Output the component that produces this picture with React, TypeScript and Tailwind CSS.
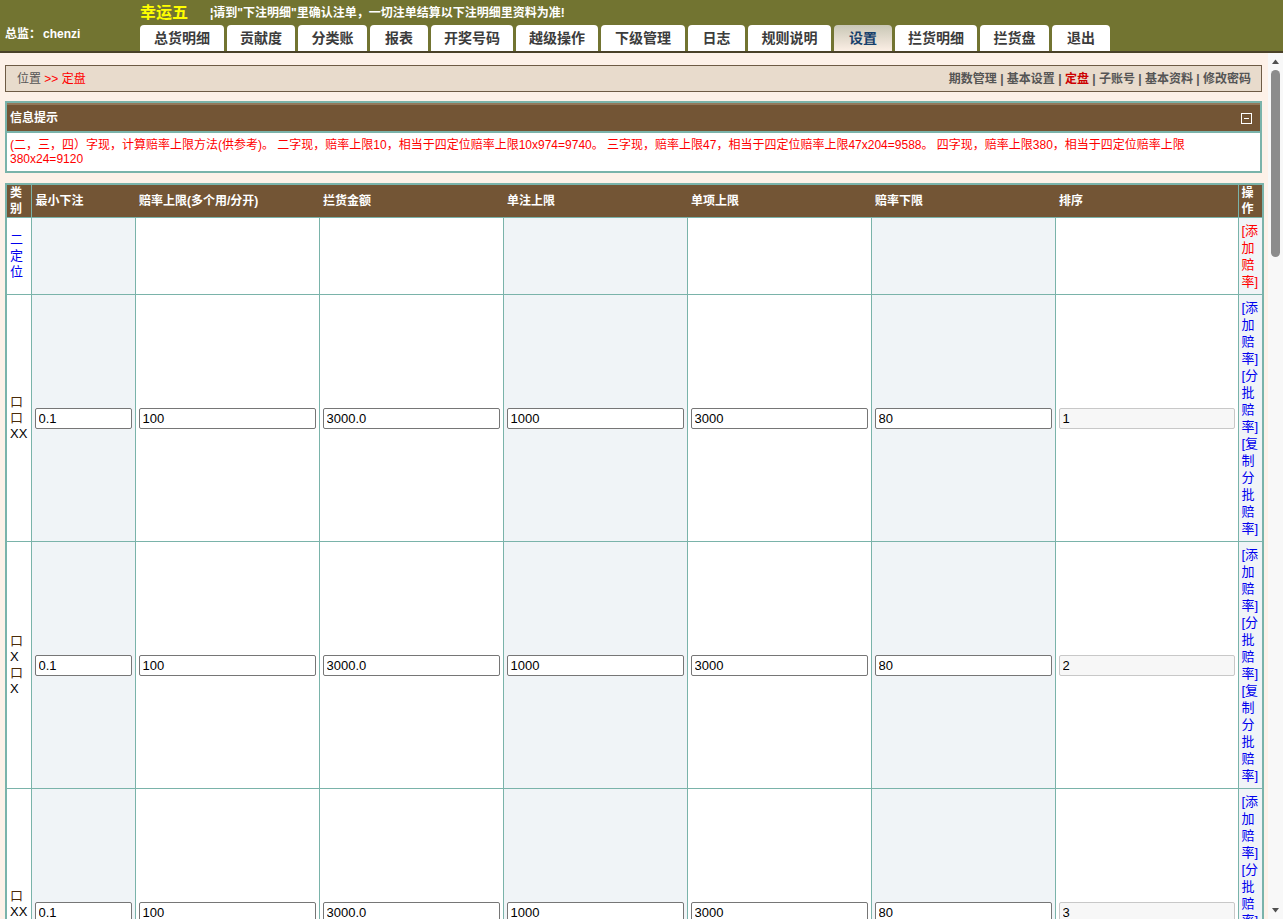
import React from "react";

const tabs: { t: string; w: string }[] = [
  { t: "总货明细", w: "w-[84px]" },
  { t: "贡献度", w: "w-[68px]" },
  { t: "分类账", w: "w-[69px]" },
  { t: "报表", w: "w-[58px]" },
  { t: "开奖号码", w: "w-[82px]" },
  { t: "越级操作", w: "w-[82px]" },
  { t: "下级管理", w: "w-[84px]" },
  { t: "日志", w: "w-[57px]" },
  { t: "规则说明", w: "w-[83px]" },
  { t: "设置", w: "w-[58px]" },
  { t: "拦货明细", w: "w-[82px]" },
  { t: "拦货盘", w: "w-[69px]" },
  { t: "退出", w: "w-[58px]" },
];

type Row = {
  cls: React.ReactNode;
  ops: "add" | "full";
  values?: string[];
};

const Box = () => <span className="text-[#4a2a08]">口</span>;

const rows: Row[] = [
  { cls: <span className="text-[#0000ee]">二定位</span>, ops: "add" },
  {
    cls: (
      <>
        <Box />
        <Box />
        XX
      </>
    ),
    ops: "full",
    values: ["0.1", "100", "3000.0", "1000", "3000", "80", "1"],
  },
  {
    cls: (
      <>
        <Box />X<Box />X
      </>
    ),
    ops: "full",
    values: ["0.1", "100", "3000.0", "1000", "3000", "80", "2"],
  },
  {
    cls: (
      <>
        <Box />
        XX
        <Box />
      </>
    ),
    ops: "full",
    values: ["0.1", "100", "3000.0", "1000", "3000", "80", "3"],
  },
  {
    cls: (
      <>
        X<Box />
        <Box />X
      </>
    ),
    ops: "full",
    values: ["0.1", "100", "3000.0", "1000", "3000", "80", "4"],
  },
  {
    cls: (
      <>
        X<Box />X<Box />
      </>
    ),
    ops: "full",
    values: ["0.1", "100", "3000.0", "1000", "3000", "80", "5"],
  },
];

const colBg = [
  "bg-white",
  "bg-[#f0f4f7]",
  "bg-white",
  "bg-white",
  "bg-[#f0f4f7]",
  "bg-white",
  "bg-[#f0f4f7]",
  "bg-white",
  "bg-[#f0f4f7]",
];

export default function App() {
  return (
    <div
      className="h-[919px] overflow-hidden bg-[#fdf1e8] text-[12px] text-black"
      style={{ fontFamily: '"Liberation Sans", Arial, "Noto Sans CJK SC", sans-serif' }}
    >
      {/* Header */}
      <header className="flex h-[53px] bg-[#727431] border-b-2 border-[#4a4128]">
        <div className="w-[140px] shrink-0 pl-[5px] pt-[25px] text-[12px] font-bold text-white">
          总监：<span className="ml-[2px]">chenzi</span>
        </div>
        <div className="flex flex-col">
          <div className="flex h-[25px] items-center">
            <span className="text-[16px] font-bold leading-none text-[#ffff00]">幸运五</span>
            <span className="ml-[22px] text-[12px] font-bold text-white">
              ¦请到"下注明细"里确认注单，一切注单结算以下注明细里资料为准!
            </span>
          </div>
          <nav className="flex h-[26px] items-end gap-[3px]">
            {tabs.map(({ t, w }) => (
              <div
                key={t}
                className={`${w} ${
                  t === "设置"
                    ? "bg-gradient-to-b from-[#c9c7b6] to-[#fcefe5] text-[#17406b]"
                    : "bg-white text-[#3c3c3c]"
                } flex h-[26px] shrink-0 items-center justify-center rounded-t-[4px] text-[14px] font-bold`}
              >
                {t}
              </div>
            ))}
          </nav>
        </div>
      </header>

      <div className="flex h-[866px]">
        <main className="min-w-0 flex-1 overflow-hidden pl-[5px] pr-[6px] pt-[12px]">
          {/* Breadcrumb */}
          <div className="flex h-[27px] items-center justify-between border border-[#6e5b45] bg-[#e8dbcc] pl-[11px] pr-[10px]">
            <div>
              <span className="text-[#555]">位置</span>
              <span className="text-[#ff0000]"> &gt;&gt; 定盘</span>
            </div>
            <div className="font-bold text-[#555]">
              期数管理 | 基本设置 | <span className="text-[#cc0000]">定盘</span> | 子账号 | 基本资料 | 修改密码
            </div>
          </div>

          {/* Info box */}
          <div className="mt-[9px] border-2 border-[#7ab3aa] bg-white">
            <div className="flex h-[28px] items-center justify-between border-t-2 border-[#93785a] bg-[#735535] pl-[3px] pr-[8px]">
              <span className="font-bold text-white">信息提示</span>
              <span className="flex h-[11px] w-[11px] items-center justify-center border border-white">
                <span className="h-[1px] w-[5px] bg-white" />
              </span>
            </div>
            <div className="border-t-2 border-[#7ab3aa] px-[3px] py-[5px] text-[12px] leading-[14px] text-[#ff0000]">
              (二，三，四）字现，计算赔率上限方法(供参考)。 二字现，赔率上限10，相当于四定位赔率上限10x974=9740。
              三字现，赔率上限47，相当于四定位赔率上限47x204=9588。 四字现，赔率上限380，相当于四定位赔率上限380x24=9120
            </div>
          </div>

          {/* Table */}
          <table className="mt-[10px] w-full table-fixed border-collapse border-2 border-[#7ab3aa]">
            <colgroup>
              <col className="w-[25px]" />
              <col className="w-[104px]" />
              <col className="w-[184px]" />
              <col className="w-[184px]" />
              <col className="w-[184px]" />
              <col className="w-[184px]" />
              <col className="w-[184px]" />
              <col className="w-[183px]" />
              <col className="w-[25px]" />
            </colgroup>
            <thead>
              <tr className="h-[33px] bg-[#735535] text-left font-bold text-white">
                <th className="border border-[#7ab3aa] px-[3px] leading-[16px]">类别</th>
                <th className="border-y border-[#7ab3aa] px-[4px]">最小下注</th>
                <th className="border-y border-[#7ab3aa] px-[4px]">赔率上限(多个用/分开)</th>
                <th className="border-y border-[#7ab3aa] px-[4px]">拦货金额</th>
                <th className="border-y border-[#7ab3aa] px-[4px]">单注上限</th>
                <th className="border-y border-[#7ab3aa] px-[4px]">单项上限</th>
                <th className="border-y border-[#7ab3aa] px-[4px]">赔率下限</th>
                <th className="border-y border-[#7ab3aa] px-[4px]">排序</th>
                <th className="border border-[#7ab3aa] px-[3px] leading-[16px]">操作</th>
              </tr>
            </thead>
            <tbody>
              {rows.map((r, i) => (
                <tr key={i}>
                  <td className={`${colBg[0]} border border-[#7ab3aa] px-[3px] py-[4px] text-[13px] leading-[16px]`}>
                    {r.cls}
                  </td>
                  {Array.from({ length: 7 }).map((_, c) => (
                    <td key={c} className={`${colBg[c + 1]} border border-[#7ab3aa] px-[3px]`}>
                      {r.values ? (
                        <input
                          readOnly
                          value={r.values[c]}
                          className={
                            c === 6
                              ? "block h-[21px] w-full rounded-[2px] border border-[#c8c8c8] bg-[#f7f7f7] px-[3px] text-[13px] text-black outline-none"
                              : "block h-[21px] w-full rounded-[2px] border border-[#767676] bg-white px-[3px] text-[13px] text-black outline-none"
                          }
                        />
                      ) : null}
                    </td>
                  ))}
                  <td className={`${colBg[8]} border border-[#7ab3aa] px-[3px] py-[4px] text-[13px] leading-[17px]`}>
                    {r.ops === "add" ? (
                      <span className="text-[#ff0000]">[添加赔率]</span>
                    ) : (
                      <span className="text-[#0000ee]">[添加赔率][分批赔率][复制分批赔率]</span>
                    )}
                  </td>
                </tr>
              ))}
            </tbody>
          </table>
        </main>

        {/* Scrollbar of the content frame */}
        <aside className="flex w-[15px] shrink-0 flex-col items-center bg-[#f8f8f8]">
          <svg width="15" height="17" viewBox="0 0 15 17" className="shrink-0">
            <path d="M4 11 L7.5 6.5 L11 11 Z" fill="#505050" />
          </svg>
          <div className="h-[187px] w-[9px] shrink-0 rounded-full bg-[#8c8c8c]" />
          <div className="flex-1" />
          <svg width="15" height="17" viewBox="0 0 15 17" className="shrink-0">
            <path d="M4 6 L7.5 10.5 L11 6 Z" fill="#505050" />
          </svg>
        </aside>
      </div>
    </div>
  );
}
